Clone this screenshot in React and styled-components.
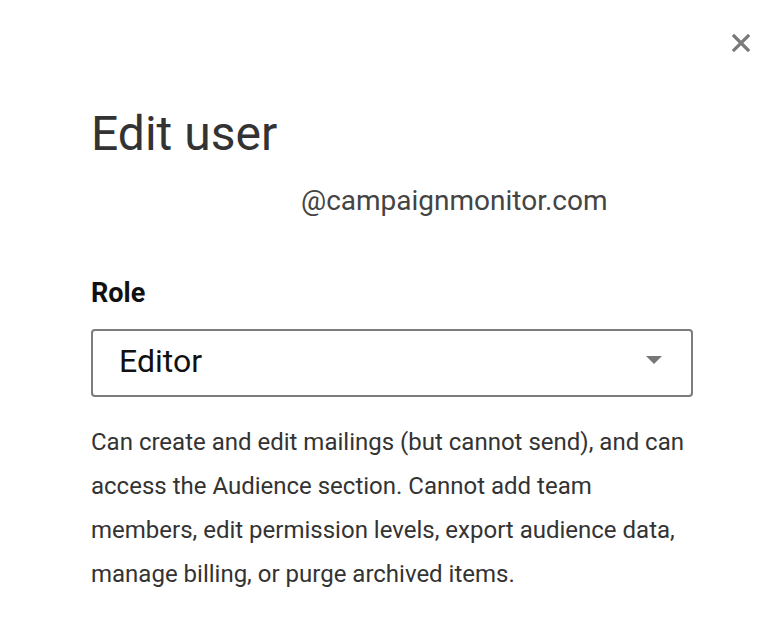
import React from "react";
import styled, { createGlobalStyle } from "styled-components";

const Global = createGlobalStyle`
  html, body { margin: 0; padding: 0; background: #fff; }
  body { font-family: Roboto, "Noto Sans", Arial, sans-serif; }
`;

const Modal = styled.div`
  position: relative;
  width: 780px;
  height: 620px;
  box-sizing: border-box;
  padding: 106px 87px 0 91px;
  background: #fff;
`;

const CloseButton = styled.button`
  position: absolute;
  top: 30px;
  right: 26px;
  width: 26px;
  height: 26px;
  padding: 0;
  border: 0;
  background: none;
  display: flex;
  align-items: center;
  justify-content: center;
  cursor: pointer;
`;

const Title = styled.h1`
  margin: 0;
  font-size: 48px;
  line-height: 56px;
  font-weight: 400;
  color: #333;
`;

const Email = styled.div`
  margin-top: 22px;
  font-size: 28px;
  line-height: 34px;
  color: #444;
`;

const Redacted = styled.span`
  display: inline-block;
  width: 210px;
`;

const Label = styled.label`
  display: block;
  margin-top: 59px;
  font-size: 27px;
  line-height: 32px;
  font-weight: 700;
  color: #111;
`;

const Select = styled.div`
  margin-top: 20px;
  height: 68px;
  box-sizing: border-box;
  border: 2px solid #7c7c7c;
  border-radius: 4px;
  display: flex;
  align-items: center;
  justify-content: space-between;
  padding: 0 29px 4px 26px;
  font-size: 32px;
  color: #111;
`;

const Arrow = styled.svg`
  margin-top: -3px;
  flex: none;
`;

const Description = styled.p`
  margin: 23px 0 0;
  font-size: 24px;
  line-height: 44px;
  color: #333;
`;

export default function App() {
  return (
    <>
      <Global />
      <Modal>
        <CloseButton aria-label="Close">
          <svg width="18" height="18" viewBox="0 0 18 18">
            <path d="M2 2 L16 16 M16 2 L2 16" stroke="#7a7a7a" strokeWidth="3.2" strokeLinecap="square" />
          </svg>
        </CloseButton>
        <Title>Edit user</Title>
        <Email>
          <Redacted />@campaignmonitor.com
        </Email>
        <Label>Role</Label>
        <Select>
          <span>Editor</span>
          <Arrow width="16" height="8" viewBox="0 0 16 8">
            <path d="M0 0 L16 0 L8 8 Z" fill="#777" />
          </Arrow>
        </Select>
        <Description>
          Can create and edit mailings (but cannot send), and can access the Audience section. Cannot add team
          members, edit permission levels, export audience data, manage billing, or purge archived items.
        </Description>
      </Modal>
    </>
  );
}
